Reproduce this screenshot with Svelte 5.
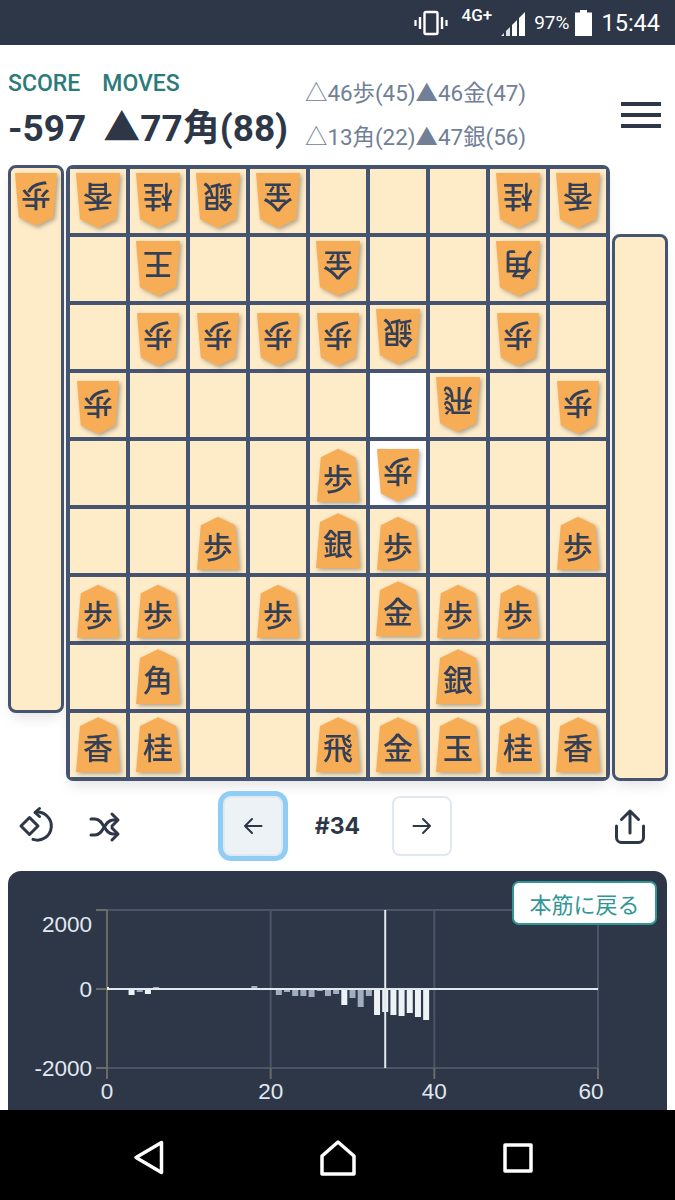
<script>
  const rows = [
    ['香v','桂v','銀v','金v','','','','桂v','香v'],
    ['','王v','','','金v','','','角v',''],
    ['','歩v','歩v','歩v','歩v','銀v','','歩v',''],
    ['歩v','','','','','*','飛v','','歩v'],
    ['','','','','歩','*歩v','','',''],
    ['','','歩','','銀','歩','','','歩'],
    ['歩','歩','','歩','','金','歩','歩',''],
    ['','角','','','','','銀','',''],
    ['香','桂','','','飛','金','玉','桂','香']
  ];
  const cells = rows.flat().map((s) => ({
    lit: s.startsWith('*'),
    ch: s.replace('*', '').replace('v', ''),
    flip: s.endsWith('v')
  }));

  const X0 = 99, STEP = 8.183, Y0 = 118;
  const px = (n) => X0 + n * STEP;
  const LIGHT = '#edf2f7', MID = '#a0aec0';
  const bars = [
    [3, 6, LIGHT],[4, 3, MID],[5, 5, LIGHT],[6, -2, MID],[7, 1, MID],[9, 1, LIGHT],[11, 1, MID],[12, -1, MID],
    [13, 1, MID],[14, -1, MID],[16, 1, MID],[18, -3, MID],
    [21, 6, MID],[22, 3, MID],[23, 7, MID],[24, 7, MID],[25, 8, MID],[26, 2, MID],[27, 7, MID],[28, 5, MID],
    [29, 16, LIGHT],[30, 9, MID],[31, 18, MID],[32, 7, MID],
    [33, 26, LIGHT],[34, 23, LIGHT],[35, 26, LIGHT],[36, 27, LIGHT],[37, 24, LIGHT],[38, 28, LIGHT],[39, 31, LIGHT]
  ];
  const vticks = [[0, 0], [20, 20], [40, 40], [60, 59.150]];
  const hticks = [[39, '2000', 61], [118, '0', 126], [197, '-2000', 205]];
</script>

<div class="page">
  <div class="status">
    <svg class="vib" width="34" height="26" viewBox="0 0 34 26">
      <rect x="10.5" y="2" width="13" height="22" rx="1.5" fill="none" stroke="#fff" stroke-width="2.4"/>
      <path d="M6 7v12M28 7v12" stroke="#fff" stroke-width="2.4"/>
      <path d="M1.5 10v6M32.5 10v6" stroke="#fff" stroke-width="2.2"/>
    </svg>
    <span class="net">4G+</span>
    <svg class="sig" width="26" height="26" viewBox="0 0 26 26">
      <path d="M1 25h3v-3z M6 25h4v-9l-4 4z" fill="#fff" opacity=".85"/>
      <path d="M12 25h5V9l-5 5z M19 25h6V1l-6 6z" fill="#fff"/>
    </svg>
    <span class="pct">97%</span>
    <svg class="bat" width="17" height="26" viewBox="0 0 17 26">
      <path d="M5 0h7v2.500h5V26H0V2.500h5z" fill="#fff"/>
    </svg>
    <span class="time">15:44</span>
  </div>

  <header class="head">
    <div class="scores">
      <div class="labels">
        <span class="label">SCORE</span>
        <span class="label">MOVES</span>
      </div>
      <div class="values">
        <span class="big">-597</span>
        <span class="big">▲77角(88)</span>
      </div>
    </div>
    <div class="alts">
      <div>△46歩(45)▲46金(47)</div>
      <div>△13角(22)▲47銀(56)</div>
    </div>
    <button class="menu" aria-label="menu"><i></i><i></i><i></i></button>
  </header>

  <section class="board-row">
    <div class="stand left">
      <div class="wrap"><div class="piece pawn flip">歩</div></div>
    </div>
    <div class="board">
      {#each cells as c}
        <div class="cell" class:lit={c.lit}>
          {#if c.ch}
            <div class="wrap">
              <div class="piece" class:pawn={c.ch === '歩'} class:flip={c.flip}>{c.ch}</div>
            </div>
          {/if}
        </div>
      {/each}
    </div>
    <div class="stand right"></div>
  </section>

  <section class="controls">
    <div class="tools">
      <svg width="40" height="40" viewBox="0 0 40 40" class="ico">
        <path d="M11.500 11.500 20 20l-8.500 8.500L3 20z"/>
        <path d="M17.500 6.200A14 14 0 1 1 15 33.400"/>
        <path d="M21.500 2.500 17 6.500l4.500 4"/>
      </svg>
      <svg width="34" height="36" viewBox="0 0 34 36" class="ico">
        <path d="M3 11h4c9 0 9 15 18 15h4"/>
        <path d="M3 27h4c9 0 9-15 18-15h4"/>
        <path d="M24 6l6 6-6 6"/>
        <path d="M24 20l6 6-6 6"/>
      </svg>
    </div>
    <div class="nav-moves">
      <button class="step active" aria-label="back">
        <svg width="20" height="18" viewBox="0 0 20 18" class="ico thin"><path d="M18.500 9H2M9 2 2 9l7 7"/></svg>
      </button>
      <span class="num">#34</span>
      <button class="step" aria-label="forward">
        <svg width="20" height="18" viewBox="0 0 20 18" class="ico thin"><path d="M1.500 9H18M11 2l7 7-7 7"/></svg>
      </button>
    </div>
    <div class="share">
      <svg width="32" height="36" viewBox="0 0 32 36" class="ico">
        <path d="M16 25V3M7.500 11.500 16 3l8.500 8.500"/>
        <path d="M2.500 18v11.500a5 5 0 0 0 5 5h17a5 5 0 0 0 5-5V18"/>
      </svg>
    </div>
  </section>

  <section class="chart">
    <svg width="659" height="239" viewBox="0 0 659 239">
      {#each hticks as [y, label, base]}
        <line x1="88" x2="99" y1={y} y2={y} class="tick"/>
        <line x1="99" x2="590" y1={y} y2={y} class="grid"/>
        <text x="84" y={base} text-anchor="end" class="axis">{label}</text>
      {/each}
      {#each vticks as [n, lx]}
        <line x1={px(n)} x2={px(n)} y1="39" y2="197" class={n === 0 ? 'tick' : 'grid'}/>
        <line x1={px(n)} x2={px(n)} y1="197" y2="208" class="tick"/>
        <text x={px(lx)} y="228" text-anchor="middle" class="axis">{n}</text>
      {/each}
      {#each bars as [n, d, fill]}
        <rect x={px(n) - 3} y={d > 0 ? Y0 : Y0 + d} width="6" height={Math.abs(d)} {fill}/>
      {/each}
      <line x1="99" x2="590" y1="118" y2="118" class="zero"/>
      <line x1={px(34)} x2={px(34)} y1="39" y2="197" class="cursor"/>
      <rect x="99" y="116" width="2" height="2" fill="#faf089"/>
    </svg>
    <button class="back-main">本筋に戻る</button>
  </section>

  <footer class="sysnav">
    <svg width="31" height="35" viewBox="0 0 31 35" class="sys back">
      <path d="M3 17.500 28.500 2.500v30z"/>
    </svg>
    <svg width="38" height="38" viewBox="0 0 38 38" class="sys home">
      <path d="M19 3 35 17v18H3V17z"/>
    </svg>
    <svg width="32" height="32" viewBox="0 0 32 32" class="sys square">
      <path d="M3 3h26v26H3z"/>
    </svg>
  </footer>
</div>

<style>
  :global(body) { margin: 0; background: #fff; }
  * { box-sizing: border-box; }
  .page {
    width: 675px;
    height: 1200px;
    overflow: hidden;
    display: flex;
    flex-direction: column;
    font-family: Roboto, "Noto Sans CJK JP", sans-serif;
    color: #2d3748;
  }

  .status {
    height: 45px;
    flex: none;
    background: #2d3748;
    color: #fff;
    display: flex;
    align-items: center;
    justify-content: flex-end;
    padding-right: 15px;
  }
  .net { font-size: 17px; font-weight: 500; align-self: flex-start; margin: 5px 8px 0 14px; }
  .sig { margin-top: 3px; }
  .pct { font-size: 19px; margin: 0 6px 0 8px; }
  .bat { margin-right: 9px; }
  .time { font-size: 23.500px; }

  .head {
    height: 120px;
    flex: none;
    display: flex;
    padding: 25px 14px 0 8px;
  }
  .scores { width: 297px; }
  .labels { display: flex; gap: 22px; }
  .values { display: flex; gap: 17px; margin-top: 6px; }
  .label { font-size: 23px; font-weight: 500; color: #2c7a7b; line-height: 28px; }
  .big { font-size: 37px; font-weight: 700; line-height: 50px; white-space: nowrap; }
  .alts {
    color: #718096;
    font-size: 22.400px;
    line-height: 44px;
    margin-top: 1px;
    white-space: nowrap;
  }
  .menu {
    margin: 32px 0 0 auto;
    width: 40px;
    height: 26px;
    padding: 0;
    border: 0;
    background: none;
    display: flex;
    flex-direction: column;
    justify-content: space-between;
  }
  .menu i { display: block; height: 4px; background: #2d3748; }

  .board-row {
    flex: none;
    height: 615.500px;
    padding: 0 7.500px 0 8px;
    display: flex;
    justify-content: space-between;
  }
  .stand {
    width: 55.500px;
    background: #feebc8;
    border: 3.500px solid #455571;
    border-radius: 8px;
    box-shadow: 0 8px 14px -4px rgba(0, 0, 0, .12);
  }
  .stand.left { width: 56px; height: 548px; align-self: flex-start; display: flex; justify-content: center; padding-top: 5px; }
  .stand.right { height: 547px; align-self: flex-end; }
  .board {
    width: 543.500px;
    height: 615.500px;
    display: grid;
    grid-template-columns: repeat(9, 56.500px);
    grid-template-rows: repeat(9, 64.500px);
    gap: 3.500px;
    padding: 3.500px;
    background: #455571;
    border-radius: 7px;
    box-shadow: 0 8px 14px -4px rgba(0, 0, 0, .12);
  }
  .cell {
    background: #feebc8;
    display: flex;
    align-items: center;
    justify-content: center;
  }
  .cell.lit { background: #fff; }
  .wrap { filter: drop-shadow(2px 2px 2px rgba(0, 0, 0, .3)); }
  .piece {
    width: 44px;
    height: 55px;
    background: #f6ad55;
    clip-path: polygon(50% 0, 91% 16%, 100% 100%, 0 100%, 9% 16%);
    display: flex;
    align-items: center;
    justify-content: center;
    padding-top: 3px;
    font-family: "Noto Sans CJK JP", sans-serif;
    font-size: 30px;
    font-weight: 500;
    line-height: 1;
    color: #323f58;
  }
  .piece.pawn { width: 42px; height: 53px; }
  .cell .piece.pawn { margin-top: 5px; }
  .piece.flip { transform: rotate(180deg); }

  .controls {
    height: 90.500px;
    flex: none;
    display: grid;
    grid-template-columns: 1fr auto 1fr;
    align-items: center;
  }
  .tools { display: flex; align-items: center; gap: 30px; padding-left: 18px; }
  .share { display: flex; justify-content: flex-end; padding-right: 29px; }
  .ico { fill: none; stroke: #2d3748; stroke-width: 3; stroke-linecap: round; stroke-linejoin: round; }
  .ico.thin { stroke-width: 2; }
  .nav-moves { display: flex; align-items: center; }
  .num { width: 109px; text-align: center; font-size: 23px; font-weight: 700; font-family: Inter, sans-serif; }
  .step {
    width: 60px;
    height: 60px;
    padding: 0;
    background: #fff;
    border: 2px solid #e2e8f0;
    border-radius: 8px;
    display: flex;
    align-items: center;
    justify-content: center;
  }
  .step.active { background: #edf2f7; box-shadow: 0 0 0 5px #90cdf4; }

  .chart {
    flex: 1;
    margin: 0 8px;
    background: #2d3748;
    border-radius: 13px 13px 0 0;
    position: relative;
    overflow: hidden;
  }
  .chart svg { display: block; }
  .axis { font-family: "Liberation Sans", Arial, sans-serif; font-size: 22.500px; fill: #e2e8f0; }
  .tick { stroke: #6a6a66; stroke-width: 2; }
  .grid { stroke: #4a5568; stroke-width: 2; }
  .zero { stroke: #e2e8f0; stroke-width: 2; }
  .cursor { stroke: #e2e8f0; stroke-width: 2; }
  .back-main {
    position: absolute;
    top: 10px;
    right: 10px;
    width: 145px;
    height: 44px;
    padding: 0;
    background: #fff;
    border: 2px solid #319795;
    border-radius: 7px;
    color: #319795;
    font-family: "Noto Sans CJK JP", sans-serif;
    font-size: 22px;
  }

  .sysnav {
    height: 90px;
    flex: none;
    background: #000;
    display: flex;
    align-items: center;
    padding: 5px 0 0 133px;
  }
  .sys { fill: none; stroke: #fff; stroke-width: 3.500; stroke-linejoin: round; flex: none; }
  .home { margin-left: 155px; }
  .square { margin-left: 145px; }
</style>
